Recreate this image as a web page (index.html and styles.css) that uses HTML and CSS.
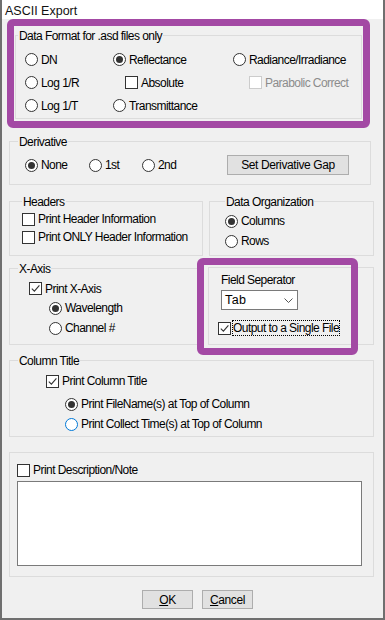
FILE: index.html
```html
<!DOCTYPE html>
<html lang="en">
<head>
<meta charset="UTF-8">
<title>ASCII Export</title>
<link rel="stylesheet" href="styles.css">
</head>
<body>

<div class="window">
    <div class="titlebar">ASCII Export</div>

    <div class="content">
        <fieldset class="grp fmt">
            <legend>Data Format for .asd files only</legend>
            <div class="fmt-grid">
                <label class="opt"><span class="radio"></span>DN</label>
                <label class="opt"><span class="radio on"></span>Reflectance</label>
                <label class="opt"><span class="radio"></span>Radiance/Irradiance</label>
                <label class="opt"><span class="radio"></span>Log 1/R</label>
                <label class="opt indent-abs"><span class="check"></span>Absolute</label>
                <label class="opt indent-par disabled"><span class="check"></span>Parabolic Correct</label>
                <label class="opt"><span class="radio"></span>Log 1/T</label>
                <label class="opt"><span class="radio"></span>Transmittance</label>
            </div>
        </fieldset>

        <fieldset class="grp deriv">
            <legend>Derivative</legend>
            <div class="deriv-row">
                <label class="opt"><span class="radio on"></span>None</label>
                <label class="opt"><span class="radio"></span>1st</label>
                <label class="opt"><span class="radio"></span>2nd</label>
                <button type="button" class="btn gap-btn">Set Derivative Gap</button>
            </div>
        </fieldset>

        <div class="pair pair-top">
            <fieldset class="grp headers">
                <legend>Headers</legend>
                <label class="opt row18"><span class="check"></span>Print Header Information</label>
                <label class="opt row18"><span class="check"></span>Print ONLY Header Information</label>
            </fieldset>
            <fieldset class="grp dataorg">
                <legend>Data Organization</legend>
                <label class="opt row20"><span class="radio on"></span>Columns</label>
                <label class="opt row20"><span class="radio"></span>Rows</label>
            </fieldset>
        </div>

        <div class="pair pair-mid">
            <fieldset class="grp xaxis">
                <legend>X-Axis</legend>
                <label class="opt row19 lvl1"><span class="check"><svg viewBox="0 0 11 11" width="11" height="11"><path d="M1.8 5.6l2.6 2.6L9.4 2.4" fill="none" stroke="#333" stroke-width="1.1"/></svg></span>Print X-Axis</label>
                <label class="opt row20 lvl2"><span class="radio on"></span>Wavelength</label>
                <label class="opt row20 lvl2"><span class="radio"></span>Channel #</label>
            </fieldset>
            <div class="grp sep">
                <div class="sep-label">Field Seperator</div>
                <div class="select">
                    <span>Tab</span>
                    <svg width="9" height="5" viewBox="0 0 9 5"><path d="M0.5 0.5l4 4 4-4" fill="none" stroke="#555" stroke-width="1"/></svg>
                </div>
                <label class="opt single"><span class="check"><svg viewBox="0 0 11 11" width="11" height="11"><path d="M1.8 5.6l2.6 2.6L9.4 2.4" fill="none" stroke="#333" stroke-width="1.1"/></svg></span><span class="focus">Output to a Single File</span></label>
            </div>
        </div>

        <fieldset class="grp coltitle">
            <legend>Column Title</legend>
            <label class="opt row18 lvl-ct"><span class="check"><svg viewBox="0 0 11 11" width="11" height="11"><path d="M1.8 5.6l2.6 2.6L9.4 2.4" fill="none" stroke="#333" stroke-width="1.1"/></svg></span>Print Column Title</label>
            <div class="ct-radios">
                <label class="opt row20"><span class="radio on"></span>Print FileName(s) at Top of Column</label>
                <label class="opt row20"><span class="radio hover"></span>Print Collect Time(s) at Top of Column</label>
            </div>
        </fieldset>

        <div class="grp note">
            <label class="opt note-check"><span class="check"></span>Print Description/Note</label>
            <div class="note-box"></div>
        </div>

        <div class="actions">
            <button type="button" class="btn small"><u>O</u>K</button>
            <button type="button" class="btn small"><u>C</u>ancel</button>
        </div>
    </div>

    <div class="mark mark-fmt"></div>
    <div class="mark mark-sep"></div>
</div>

</body>
</html>
```

FILE: styles.css
```css
* {
    box-sizing: border-box;
}
body {
    margin: 0;
    font-family: "Liberation Sans", Arial, sans-serif;
    font-size: 12px;
    letter-spacing: -0.55px;
    color: #000;
    background-color: #fff;
}
.window {
    position: relative;
    width: 385px;
    height: 620px;
    border: 2px solid #6f6f6f;
    border-top: 0;
    background-color: #f0f0f0;
}
.titlebar {
    height: 19px;
    padding: 3px 0 0 3px;
    background-color: #fff;
    font-size: 12.5px;
    letter-spacing: 0;
    line-height: 16px;
    color: #111;
}
.content {
    padding: 0 9px 0 7px;
}
.grp {
    margin: 0;
    padding: 0 0 0 8px;
    min-width: 0;
    border: 1px solid #dcdcdc;
}
legend {
    padding: 0 1px;
    line-height: 14px;
    position: relative;
    top: 1px;
}
.opt {
    display: flex;
    align-items: center;
    gap: 3px;
    white-space: nowrap;
}
.radio {
    display: flex;
    align-items: center;
    justify-content: center;
    flex: none;
    width: 13px;
    height: 13px;
    border: 1px solid #333;
    border-radius: 50%;
    background-color: #fff;
}
.radio.on::after {
    content: "";
    width: 7px;
    height: 7px;
    border-radius: 50%;
    background-color: #333;
}
.radio.hover {
    border-color: #0078d7;
}
.check {
    display: flex;
    align-items: center;
    justify-content: center;
    flex: none;
    width: 13px;
    height: 13px;
    border: 1px solid #333;
    background-color: #fff;
}
.disabled {
    color: #8c8c8c;
}
.disabled .check {
    border-color: #cccccc;
}
.btn {
    height: 20px;
    padding: 0;
    border: 1px solid #adadad;
    background-color: #e1e1e1;
    font-family: inherit;
    font-size: 12px;
    letter-spacing: -0.4px;
    color: #000;
}

/* data format */
.fmt {
    width: 347px;
    margin: 9px 0 0 6px;
    padding: 6px 0 1px 2px;
}
.fmt-grid {
    display: grid;
    grid-template-columns: 88px 120px 1fr;
    grid-auto-rows: 23px;
    margin-left: 7px;
}
.indent-abs {
    margin-left: 12px;
}
.indent-par {
    margin-left: 16px;
}

/* derivative */
.deriv {
    width: 362px;
    margin-top: 15px;
    padding: 7px 0 9px 8px;
}
.deriv-row {
    display: grid;
    grid-template-columns: 64px 53px 85px 122px;
    align-items: center;
    height: 20px;
    margin-left: 7px;
}
.gap-btn {
    width: 122px;
}

/* paired groups */
.pair {
    display: flex;
    gap: 6px;
}
.pair-top {
    margin-top: 9px;
}
.headers {
    width: 194px;
    padding: 2px 0 9px 12px;
}
.dataorg {
    width: 165px;
    padding: 3px 0 0 15px;
}
.row18 {
    height: 18px;
}
.row19 {
    height: 19px;
}
.row20 {
    height: 20px;
}
.pair-mid {
    margin-top: 5px;
}
.xaxis {
    width: 193px;
    padding: 4px 0 6px 8px;
}
.lvl1 {
    margin-left: 11px;
}
.lvl2 {
    margin-left: 31px;
}
.sep {
    width: 166px;
    margin-top: 6px;
    padding: 5px 0 0 12px;
}
.sep-label {
    line-height: 14px;
}
.select {
    display: flex;
    align-items: center;
    justify-content: space-between;
    width: 77px;
    height: 20px;
    margin-top: 3px;
    padding: 0 4px 0 3px;
    border: 1px solid #7a7a7a;
    background-color: #fff;
    font-size: 12.5px;
    letter-spacing: 0.4px;
}
.single {
    height: 14px;
    margin: 11px 0 0 -3px;
    gap: 2px;
}
.focus {
    outline: 1px dotted #000;
    line-height: 14px;
}

/* column title */
.coltitle {
    margin-top: 8px;
    padding: 5px 0 2px 8px;
}
.lvl-ct {
    margin-left: 28px;
}
.ct-radios {
    margin: 4px 0 0 47px;
}

/* note */
.note {
    margin-top: 15px;
    padding: 10px 0 10px 7px;
}
.note-check {
    height: 14px;
}
.note-box {
    width: 345px;
    height: 85px;
    margin-top: 4px;
    border: 1px solid #7a7a7a;
    background-color: #fff;
}

.actions {
    display: flex;
    gap: 9px;
    margin-top: 13px;
    padding-left: 133px;
}
.small {
    width: 51px;
    height: 19px;
}

/* highlight marks drawn over the dialog */
.mark {
    position: absolute;
    border: 7px solid #a349a4;
    border-radius: 6px;
    pointer-events: none;
}
.mark-fmt {
    left: 5px;
    top: 19px;
    width: 363px;
    height: 109px;
}
.mark-sep {
    left: 195px;
    top: 258px;
    width: 161px;
    height: 97px;
}
```
